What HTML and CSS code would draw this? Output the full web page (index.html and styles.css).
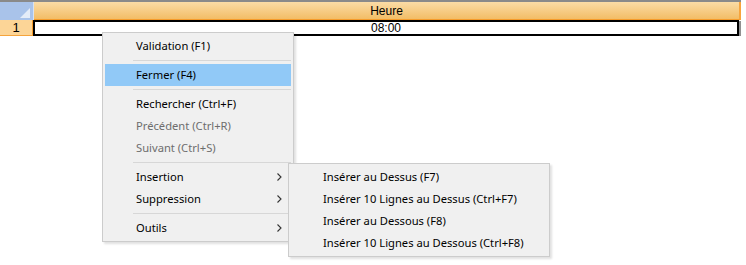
FILE: index.html
```html
<!DOCTYPE html>
<html lang="fr">
	<head>
		<meta charset="utf-8">
		<title>Heure</title>
		<link rel="stylesheet" href="styles.css">
	</head>
	<body>
		<div class="grid">
			<div class="head-row">
				<div class="corner"><span class="tri"></span></div>
				<div class="col-head">Heure</div>
			</div>
			<div class="data-row">
				<div class="row-head">1</div>
				<div class="cell">08:00</div>
			</div>
		</div>

		<div class="ctx ctx-main">
			<div class="entry">Validation (F1)</div>
			<div class="divider"></div>
			<div class="entry hot">Fermer (F4)</div>
			<div class="divider"></div>
			<div class="entry">Rechercher (Ctrl+F)</div>
			<div class="entry off">Précédent (Ctrl+R)</div>
			<div class="entry off">Suivant (Ctrl+S)</div>
			<div class="divider"></div>
			<div class="entry"><span>Insertion</span><svg class="chev" width="5" height="8" viewBox="0 0 5 8"><polyline points="0.5,0.5 4,4 0.5,7.5" fill="none" stroke="#333" stroke-width="1.1"/></svg></div>
			<div class="entry"><span>Suppression</span><svg class="chev" width="5" height="8" viewBox="0 0 5 8"><polyline points="0.5,0.5 4,4 0.5,7.5" fill="none" stroke="#333" stroke-width="1.1"/></svg></div>
			<div class="divider"></div>
			<div class="entry"><span>Outils</span><svg class="chev" width="5" height="8" viewBox="0 0 5 8"><polyline points="0.5,0.5 4,4 0.5,7.5" fill="none" stroke="#333" stroke-width="1.1"/></svg></div>
		</div>

		<div class="ctx ctx-sub">
			<div class="entry">Insérer au Dessus (F7)</div>
			<div class="entry">Insérer 10 Lignes au Dessus (Ctrl+F7)</div>
			<div class="entry">Insérer au Dessous (F8)</div>
			<div class="entry">Insérer 10 Lignes au Dessous (Ctrl+F8)</div>
		</div>
	</body>
</html>
```

FILE: styles.css
```css
body {
	background: #fff;
	font-family: "Liberation Sans", Arial, sans-serif;
	margin: 0;
}
.grid {
	border-top: 2px solid #8a8a8a;
	width: 741px;
}
.head-row,
.data-row {
	display: flex;
}
.head-row {
	height: 18px;
}
.corner {
	background: #a9c3ea;
	border-right: 1px solid #d6e2f4;
	position: relative;
	width: 33px;
}
.corner .tri {
	border-bottom: 10px solid #e4ecf8;
	border-left: 10px solid transparent;
	bottom: 2px;
	position: absolute;
	right: 3px;
}
.col-head {
	background: linear-gradient(#fbdca6, #f2bd66);
	border-bottom: 1px solid #f59b2a;
	border-right: 2px solid #f8a43c;
	flex: 1;
	font-size: 12px;
	line-height: 18px;
	text-align: center;
}
.data-row {
	height: 16px;
}
.row-head {
	background: #fcd597;
	border-bottom: 1px solid #f5a43c;
	border-right: 1px solid #f59b2a;
	font-size: 13px;
	line-height: 15px;
	text-align: center;
	width: 32px;
}
.cell {
	background: #fff;
	border: 2px solid #000;
	box-shadow: 2px 1px 0 #909090;
	box-sizing: border-box;
	flex: 1;
	font-size: 12px;
	line-height: 12px;
	margin-right: 2px;
	text-align: center;
}

.ctx {
	background: #f0f0f0;
	border: 1px solid #cccccc;
	box-shadow: 2px 2px 2px rgba(0, 0, 0, 0.12);
	display: flex;
	flex-direction: column;
	font-family: "Noto Sans", "Open Sans", sans-serif;
	font-size: 11.2px;
	padding: 2px;
	position: absolute;
}
.ctx-main {
	left: 102px;
	top: 32px;
	width: 186px;
}
.ctx-sub {
	left: 288px;
	top: 163px;
	width: 256px;
}
.entry {
	align-items: center;
	box-sizing: border-box;
	color: #000;
	display: flex;
	flex: none;
	height: 22px;
	justify-content: space-between;
	padding: 0 9px 2px 31px;
}
.ctx-sub .entry {
	padding-left: 32px;
}
.entry.hot {
	background: #91c9f7;
}
.entry.off {
	color: #6d6d6d;
}
.chev {
	display: block;
	margin-top: 2px;
}
.divider {
	flex: none;
	height: 7px;
	margin-left: 28px;
	position: relative;
}
.divider::before {
	background: #d7d7d7;
	content: '';
	height: 1px;
	left: 0;
	position: absolute;
	right: 0;
	top: 3px;
}
```
